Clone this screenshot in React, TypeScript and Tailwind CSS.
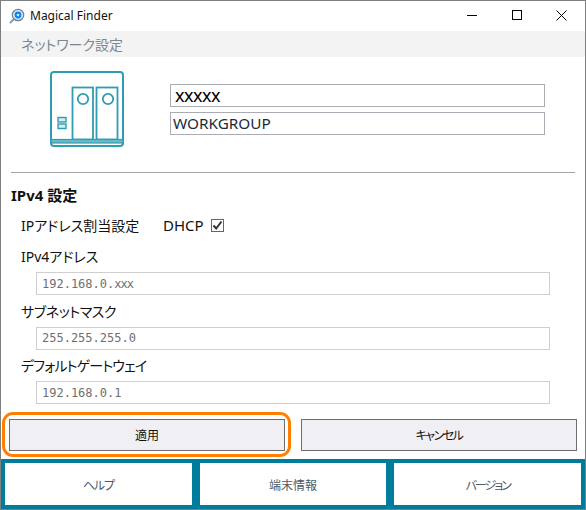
import React from "react";

const jp = "[font-family:'Noto_Sans','Noto_Sans_CJK_JP',sans-serif] [font-feature-settings:'palt']";

function AppIcon() {
  return (
    <svg width="16" height="16" viewBox="0 0 16 16" className="shrink-0">
      <path d="M5.5 10.5 L1.5 14.5" stroke="#8f9aa3" strokeWidth="2" strokeLinecap="round" />
      <circle cx="9" cy="7" r="5.7" fill="#dbe7f2" stroke="#6f7f8f" strokeWidth="1.2" />
      <circle cx="9" cy="7" r="3.4" fill="#0a84f0" />
      <circle cx="9" cy="7" r="1.3" fill="#cfe8ff" />
    </svg>
  );
}

function NasIcon() {
  const c = "#2f9db1";
  return (
    <svg width="74" height="76" viewBox="0 0 74 76" className="shrink-0" fill="none" stroke={c}>
      <rect x="1" y="1" width="72" height="74" rx="3" strokeWidth="2" />
      <rect x="22.5" y="16.5" width="20.5" height="52" strokeWidth="1.8" />
      <rect x="46.5" y="16.5" width="21" height="52" strokeWidth="1.8" />
      <circle cx="33" cy="28" r="5.2" strokeWidth="1.8" />
      <circle cx="58" cy="28" r="5.2" strokeWidth="1.8" />
      <rect x="8" y="46.5" width="8" height="4.5" fill="#d5ecf0" strokeWidth="1.4" />
      <rect x="8" y="53" width="8" height="4.5" fill="#d5ecf0" strokeWidth="1.4" />
      <rect x="1" y="68.5" width="72" height="3.5" fill="#6db9c8" strokeWidth="1.2" />
    </svg>
  );
}

function Field({ label, value, track }: { label: string; value: React.ReactNode; track: string }) {
  return (
    <div className="flex flex-col">
      <div className={`h-[23px] pl-5 text-[14px] leading-[21px] text-[#111] ${track}`}>{label}</div>
      <div className="ml-[35px] mt-[3px] flex h-[23px] w-[514px] items-center border border-[#cfcfd2] pl-[5px] text-[12px] text-[#6f6f6f] [font-family:'DejaVu_Sans_Mono',monospace]">
        {value}
      </div>
    </div>
  );
}

function ActionButton({ label, track }: { label: string; track?: string }) {
  return (
    <div className={`flex h-[32px] w-[276px] items-center justify-center border border-[#6e6e6e] bg-[#f0f0f4] pt-[2px] text-[12px] text-[#111] ${track ?? ""}`}>
      {label}
    </div>
  );
}

function NavButton({ label, track }: { label: string; track?: string }) {
  return (
    <div className={`flex h-[42px] flex-1 items-center justify-center bg-white pt-[4px] text-[12px] text-[#4a5a66] ${track ?? ""}`}>
      {label}
    </div>
  );
}

export default function App() {
  return (
    <div className={`relative flex h-[510px] w-[586px] flex-col overflow-hidden border border-[#7f7f7f] bg-white ${jp}`}>
      <div className="flex h-[30px] shrink-0 items-center">
        <div className="ml-[8px]"><AppIcon /></div>
        <div className="ml-[5px] text-[12px] text-[#111] [font-family:'Noto_Sans',sans-serif]">Magical Finder</div>
        <div className="mb-[2px] ml-auto mr-[1px] flex">
          <div className="flex h-[30px] w-[45px] items-center justify-center">
            <div className="h-px w-[10px] bg-black" />
          </div>
          <div className="flex h-[30px] w-[45px] items-center justify-center">
            <div className="h-[10px] w-[10px] border border-black" />
          </div>
          <div className="flex h-[30px] w-[45px] items-center justify-center">
            <svg width="11" height="11" viewBox="0 0 11 11" stroke="#000" strokeWidth="1" fill="none">
              <path d="M0.5 0.5 L10.5 10.5 M10.5 0.5 L0.5 10.5" />
            </svg>
          </div>
        </div>
      </div>

      <div className="flex h-[26px] shrink-0 items-center bg-[#f3f3f3] pl-5 text-[14px] text-[#7d8790]">
        ネットワーク設定
      </div>

      <div className="flex h-[115px] shrink-0 items-start pl-[49px]">
        <div className="mt-[14px]"><NasIcon /></div>
        <div className="ml-[46px] mt-[27px] flex w-[375px] flex-col gap-[5px]">
          <div className="flex h-[23px] items-center overflow-hidden border border-[#ababb3] pb-[2px] pl-[4px] text-[18px] leading-none tracking-[-0.5px] text-black [font-family:'Noto_Sans',sans-serif]">
            xxxxx
          </div>
          <div className="flex h-[23px] items-center border border-[#ababb3] pl-[2px] text-[15.3px] leading-none text-[#1a2b3c] [font-family:'Noto_Sans',sans-serif]">
            WORKGROUP
          </div>
        </div>
      </div>

      <div className="mx-[10px] h-px shrink-0 bg-[#a3a3a3]" />

      <div className="mt-[10px] h-[24px] pl-[10px] text-[15px] font-bold leading-[24px] text-[#111]">IPv4 設定</div>

      <div className="mt-[7px] flex h-[23px] items-center pl-5 text-[14px] text-[#111]">
        <span className="w-[142px]">IPアドレス割当設定</span>
        <span className="text-[15px]">DHCP</span>
        <span className="ml-[7px] flex h-[13px] w-[13px] items-center justify-center border border-[#666]">
          <svg width="11" height="11" viewBox="0 0 11 11" fill="none" stroke="#333" strokeWidth="2">
            <path d="M1.5 5.5 L4.2 8.5 L9.5 1.5" />
          </svg>
        </span>
      </div>

      <div className="mt-[9px] flex flex-col gap-[5.5px]">
        <Field label="IPv4アドレス" track="" value={<span>192.168.0.<span className="tracking-[-1px]">xxx</span></span>} />
        <Field label="サブネットマスク" track="tracking-[-0.4px]" value="255.255.255.0" />
        <Field label="デフォルトゲートウェイ" track="tracking-[-0.8px]" value="192.168.0.1" />
      </div>

      <div className="mt-[15px] flex gap-4 pl-2">
        <ActionButton label="適用" />
        <ActionButton label="キャンセル" track="tracking-[-1.5px]" />
      </div>

      <div className="mt-[8px] flex h-[50px] shrink-0 gap-2 bg-[#007c9c] p-1">
        <NavButton label="ヘルプ" track="tracking-[-1.2px]" />
        <NavButton label="端末情報" />
        <NavButton label="バージョン" track="tracking-[-2px]" />
      </div>

      <div className="absolute left-[1px] top-[411px] h-[45px] w-[289px] rounded-[11px] border-[3px] border-[#ff8000]" />
    </div>
  );
}
